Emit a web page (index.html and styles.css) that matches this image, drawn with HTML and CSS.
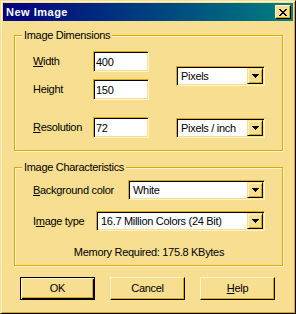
FILE: index.html
```html
<!DOCTYPE html>
<html lang="en">
<head>
  <meta charset="UTF-8">
  <title>New Image</title>
  <link rel="stylesheet" href="styles.css">
</head>
<body>
  <div class="window">
    <div class="titlebar">
      <span class="title">New Image</span>
      <button class="close" aria-label="Close">
        <svg width="8" height="7" viewBox="0 0 8 7" shape-rendering="crispEdges">
          <path d="M0 0h2v1h-2zM6 0h2v1h-2zM1 1h2v1h-2zM5 1h2v1h-2zM2 2h4v1h-4zM3 3h2v1h-2zM2 4h4v1h-4zM1 5h2v1h-2zM5 5h2v1h-2zM0 6h2v1h-2zM6 6h2v1h-2z" fill="#000"/>
        </svg>
      </button>
    </div>

    <div class="content">
      <fieldset class="group dims">
        <legend>Image Dimensions</legend>
        <div class="dims-grid">
          <label class="lbl"><u>W</u>idth</label>
          <input class="field" value="400">
          <div class="combo units">
            <span class="combo-text">Pixels</span>
            <span class="drop"><svg width="7" height="4" viewBox="0 0 7 4" shape-rendering="crispEdges"><path d="M0 0h7v1h-7zM1 1h5v1h-5zM2 2h3v1h-3zM3 3h1v1h-1z" fill="#000"/></svg></span>
          </div>
          <label class="lbl">Hei<u>g</u>ht</label>
          <input class="field" value="150">
          <label class="lbl last"><u>R</u>esolution</label>
          <input class="field last" value="72">
          <div class="combo last">
            <span class="combo-text">Pixels / inch</span>
            <span class="drop"><svg width="7" height="4" viewBox="0 0 7 4" shape-rendering="crispEdges"><path d="M0 0h7v1h-7zM1 1h5v1h-5zM2 2h3v1h-3zM3 3h1v1h-1z" fill="#000"/></svg></span>
          </div>
        </div>
      </fieldset>

      <fieldset class="group chars">
        <legend>Image Characteristics</legend>
        <div class="row">
          <label class="lbl"><u>B</u>ackground color</label>
          <div class="combo bg">
            <span class="combo-text">White</span>
            <span class="drop"><svg width="7" height="4" viewBox="0 0 7 4" shape-rendering="crispEdges"><path d="M0 0h7v1h-7zM1 1h5v1h-5zM2 2h3v1h-3zM3 3h1v1h-1z" fill="#000"/></svg></span>
          </div>
        </div>
        <div class="row">
          <label class="lbl">I<u>m</u>age type</label>
          <div class="combo type">
            <span class="combo-text">16.7 Million Colors (24 Bit)</span>
            <span class="drop"><svg width="7" height="4" viewBox="0 0 7 4" shape-rendering="crispEdges"><path d="M0 0h7v1h-7zM1 1h5v1h-5zM2 2h3v1h-3zM3 3h1v1h-1z" fill="#000"/></svg></span>
          </div>
        </div>
        <p class="memory">Memory Required: 175.8 KBytes</p>
      </fieldset>

      <div class="buttons">
        <button class="btn default">OK</button>
        <button class="btn">Cancel</button>
        <button class="btn"><u>H</u>elp</button>
      </div>
    </div>
  </div>
</body>
</html>
```

FILE: styles.css
```css
body {
  margin: 0;
  font-family: "Liberation Sans", Arial, sans-serif;
  font-size: 11px;
  line-height: 13px;
  letter-spacing: -0.3px;
  color: #000;
}

button, input {
  font: inherit;
  letter-spacing: inherit;
  color: #000;
  margin: 0;
}

.window {
  box-sizing: border-box;
  width: 296px;
  height: 314px;
  padding: 2px;
  background: #f7de90;
  border: 1px solid;
  border-color: #f7de90 #000 #000 #f7de90;
  box-shadow: inset 1px 1px 0 #fff4c8, inset -1px -1px 0 #d9aa06;
}

.titlebar {
  display: flex;
  align-items: center;
  height: 18px;
  background: linear-gradient(to right, #000080, #008080);
}

.title {
  flex: 1;
  padding-left: 3px;
  color: #fff;
  font-weight: bold;
  letter-spacing: 0.5px;
}

.close {
  display: flex;
  align-items: center;
  justify-content: center;
  box-sizing: border-box;
  width: 16px;
  height: 14px;
  margin-right: 2px;
  padding: 0;
  background: #f7de90;
  border: 1px solid;
  border-color: #fff4c8 #000 #000 #fff4c8;
  box-shadow: inset -1px -1px 0 #d9aa06;
}

.content {
  padding: 8px 0 0 11px;
}

.group {
  box-sizing: border-box;
  width: 269px;
  min-width: 0;
  margin: 0;
  padding: 9px 17px 12px 18px;
  border: 1px solid #d9aa06;
  box-shadow: 1px 1px 0 #fff4c8, inset 1px 1px 0 #fff4c8;
}

.group legend {
  margin-left: -11px;
  padding: 0 2px;
  background: #f7de90;
}

.dims-grid {
  display: grid;
  grid-template-columns: 60px 56px 1fr;
  grid-template-rows: 21px 21px 31px;
  row-gap: 7px;
}

.lbl {
  align-self: center;
}

.dims-grid .last {
  align-self: end;
}

.dims-grid .lbl.last {
  margin-bottom: 4px;
}

.field {
  box-sizing: border-box;
  width: 56px;
  height: 21px;
  padding: 0 0 0 2px;
  background: #fff;
  border: 1px solid;
  border-color: #d9aa06 #fff4c8 #fff4c8 #d9aa06;
  box-shadow: inset 1px 1px 0 #000, inset -1px -1px 0 #f7de90;
  outline: none;
}

.combo {
  display: flex;
  align-items: center;
  box-sizing: border-box;
  height: 20px;
  padding: 1px 1px 1px 4px;
  background: #fff;
  border: 1px solid;
  border-color: #d9aa06 #fff4c8 #fff4c8 #d9aa06;
  box-shadow: inset 1px 1px 0 #000, inset -1px -1px 0 #f7de90;
}

.dims-grid .combo {
  width: 89px;
  justify-self: end;
}

.dims-grid .units {
  grid-column: 3;
  grid-row: 1 / 3;
  align-self: center;
}

.combo-text {
  flex: 1;
  padding-top: 1px;
  white-space: nowrap;
}

.drop {
  display: flex;
  align-items: center;
  justify-content: center;
  box-sizing: border-box;
  width: 16px;
  height: 16px;
  background: #f7de90;
  border: 1px solid;
  border-color: #f7de90 #000 #000 #f7de90;
  box-shadow: inset 1px 1px 0 #fff4c8, inset -1px -1px 0 #d9aa06;
}

.chars {
  margin-top: 10px;
  padding-top: 6px;
  padding-bottom: 6px;
}

.row {
  display: flex;
  align-items: center;
  height: 20px;
}

.row + .row {
  margin-top: 11px;
}

.row .combo {
  margin-left: auto;
}

.combo.bg {
  width: 137px;
}

.combo.type {
  width: 169px;
}

.memory {
  margin: 15px 0 0;
  text-align: center;
}

.buttons {
  display: flex;
  gap: 15px;
  margin-top: 11px;
  padding-left: 6px;
}

.btn {
  box-sizing: border-box;
  width: 75px;
  height: 23px;
  padding: 0;
  background: #f7de90;
  border: 1px solid;
  border-color: #fff4c8 #000 #000 #fff4c8;
  box-shadow: inset -1px -1px 0 #d9aa06;
}

.btn.default {
  border-color: #000;
  box-shadow: inset 1px 1px 0 #fff4c8, inset -1px -1px 0 #000, inset -2px -2px 0 #d9aa06;
}
```
